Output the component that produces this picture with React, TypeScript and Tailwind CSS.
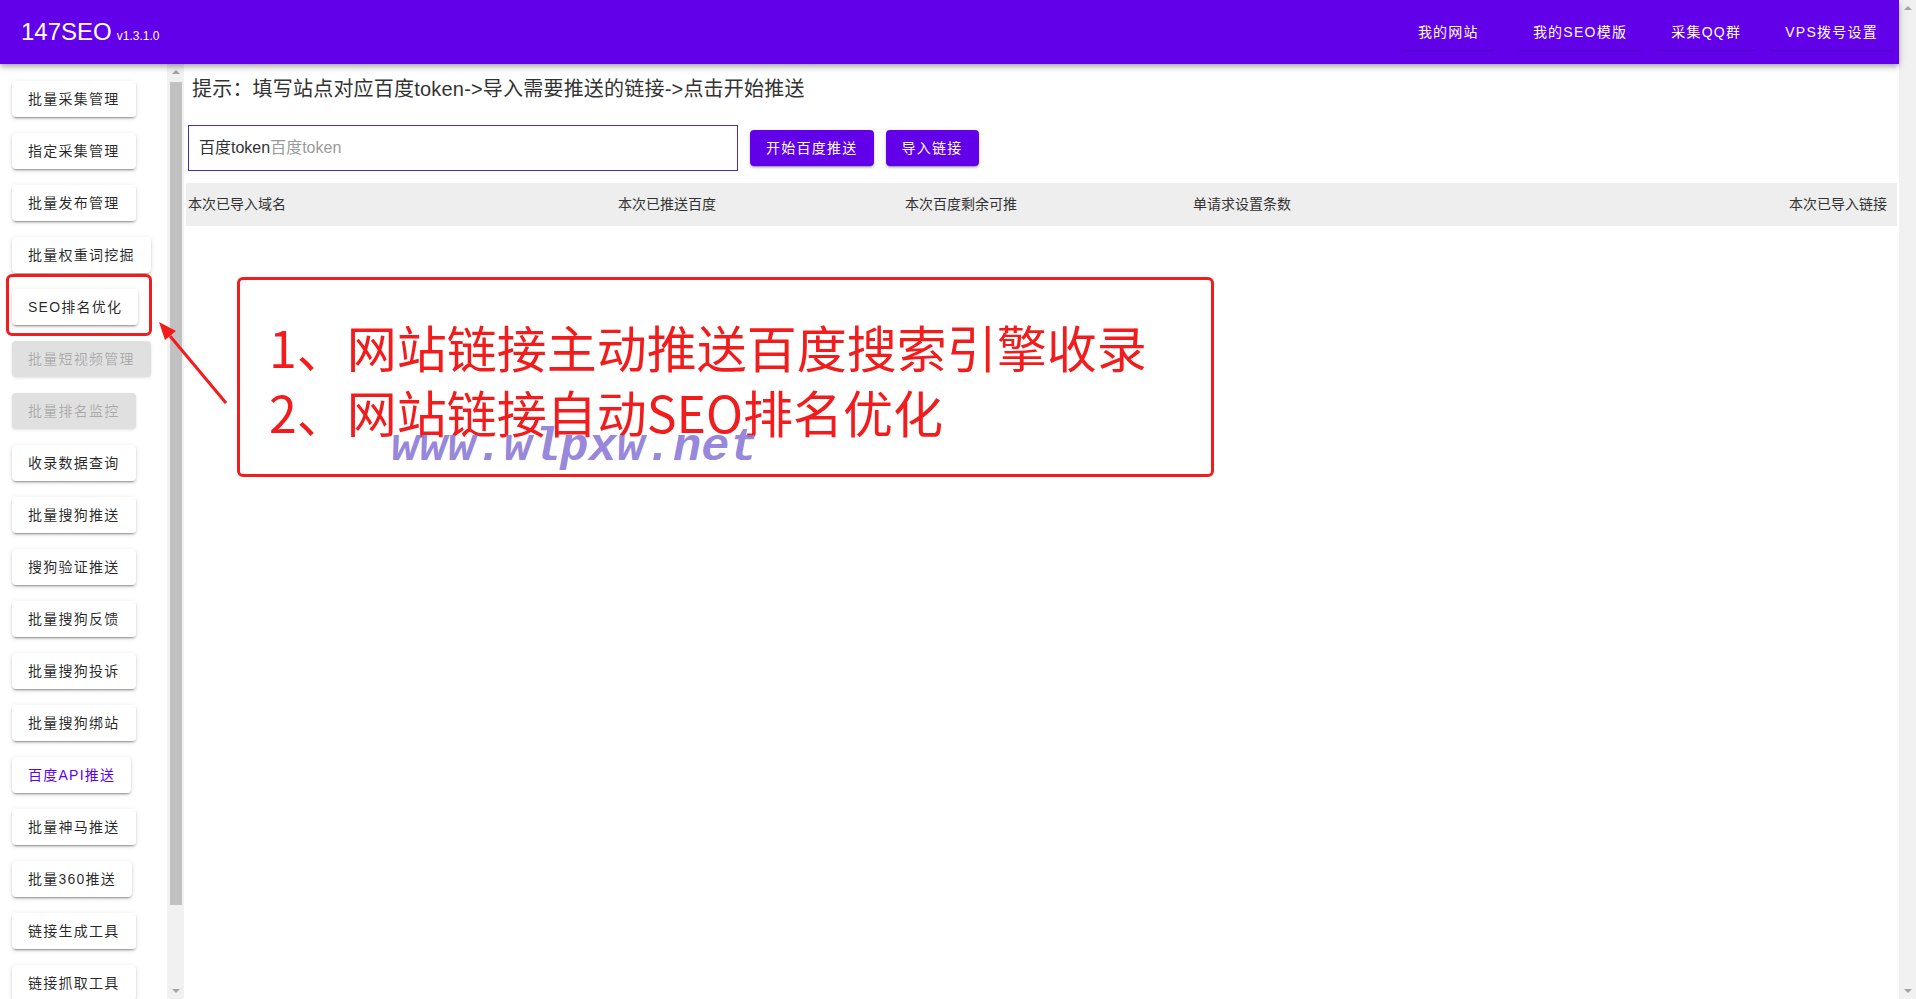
import React from "react";

const menu: { label: string; state?: "disabled" | "active" }[] = [
  { label: "批量采集管理" },
  { label: "指定采集管理" },
  { label: "批量发布管理" },
  { label: "批量权重词挖掘" },
  { label: "SEO排名优化" },
  { label: "批量短视频管理", state: "disabled" },
  { label: "批量排名监控", state: "disabled" },
  { label: "收录数据查询" },
  { label: "批量搜狗推送" },
  { label: "搜狗验证推送" },
  { label: "批量搜狗反馈" },
  { label: "批量搜狗投诉" },
  { label: "批量搜狗绑站" },
  { label: "百度API推送", state: "active" },
  { label: "批量神马推送" },
  { label: "批量360推送" },
  { label: "链接生成工具" },
  { label: "链接抓取工具" },
];

const navItems = ["我的网站", "我的SEO模版", "采集QQ群", "VPS拨号设置"];

const elev =
  "shadow-[0_3px_1px_-2px_rgba(0,0,0,0.2),0_2px_2px_0_rgba(0,0,0,0.14),0_1px_5px_0_rgba(0,0,0,0.12)]";

function ArrowUp() {
  return <div className="h-0 w-0 border-x-[4px] border-b-[4px] border-x-transparent border-b-[#a3a3a3]" />;
}
function ArrowDown() {
  return <div className="h-0 w-0 border-x-[4px] border-t-[4px] border-x-transparent border-t-[#a3a3a3]" />;
}

export default function App() {
  return (
    <div className="relative flex h-[999px] w-full overflow-hidden bg-white font-['Liberation_Sans','Noto_Sans_CJK_SC',sans-serif] text-[#333]">
      <div className="flex min-w-0 flex-1 flex-col">
        {/* top bar */}
        <header className="relative z-10 flex h-16 shrink-0 items-center justify-between bg-[#6200ea] pl-[21px] pr-[5px] text-white shadow-[0_2px_4px_-1px_rgba(0,0,0,0.2),0_4px_5px_0_rgba(0,0,0,0.14),0_1px_10px_0_rgba(0,0,0,0.12)]">
          <div className="flex items-baseline gap-[5px]">
            <span className="text-[24px] leading-none">147SEO</span>
            <span className="text-[12px] leading-none">v1.3.1.0</span>
          </div>
          <nav className="flex items-center gap-3">
            {navItems.map((n, i) => (
              <button
                key={n}
                className={`h-9 rounded bg-[#6200ea] px-4 text-[14px] tracking-[1.25px] text-white shadow-[0_2px_1px_-1px_rgba(0,0,0,0.18)] ${
                  i === 0 ? "mr-[10px]" : ""
                }`}
              >
                {n}
              </button>
            ))}
          </nav>
        </header>

        <div className="flex min-h-0 flex-1">
          {/* side menu */}
          <aside className="flex w-[167px] shrink-0 flex-col items-start gap-4 overflow-hidden pl-3 pt-[17px]">
            {menu.map((m) => (
              <button
                key={m.label}
                className={`h-9 shrink-0 rounded px-4 text-[14px] tracking-[1.25px] ${
                  m.state === "disabled"
                    ? "bg-[#e0e0e0] text-black/25 shadow-[0_1px_3px_rgba(0,0,0,0.12)]"
                    : m.state === "active"
                    ? `bg-white text-[#6200ea] ${elev}`
                    : `bg-white text-black/85 ${elev}`
                }`}
              >
                {m.label}
              </button>
            ))}
          </aside>
          <div className="flex w-[17px] shrink-0 flex-col items-center bg-[#f1f1f1] pt-[6px] pb-[6px]">
            <ArrowUp />
            <div className="mt-[8px] h-[823px] w-[12px] bg-[#c1c1c1]" />
            <div className="flex-1" />
            <ArrowDown />
          </div>

          {/* main */}
          <main className="flex min-w-0 flex-1 flex-col pr-[2px]">
            <div className="pl-[8px] pt-[11px] text-[20px] leading-[28px] tracking-[0.2px] text-[#333]">
              提示：填写站点对应百度token-&gt;导入需要推送的链接-&gt;点击开始推送
            </div>
            <div className="mt-[22px] flex items-center gap-3 pl-1">
              <div className="flex h-[46px] w-[550px] items-center border border-[#4b2bb8] px-[10px] text-[16px]">
                <span className="text-[#333]">百度token</span>
                <input
                  className="min-w-0 flex-1 bg-transparent text-[16px] outline-none placeholder:text-[#9a9a9a]"
                  placeholder="百度token"
                />
              </div>
              <button className={`h-9 rounded bg-[#6200ea] px-4 text-[14px] tracking-[1.25px] text-white ${elev}`}>
                开始百度推送
              </button>
              <button className={`h-9 rounded bg-[#6200ea] px-4 text-[14px] tracking-[1.25px] text-white ${elev}`}>
                导入链接
              </button>
            </div>
            <div className="ml-[2px] mt-3 grid h-[43px] grid-cols-[430px_287px_288px_1fr_auto] items-center bg-[#eeeeee] pl-[2px] pr-[10px] text-[14px] text-[#333]">
              <span>本次已导入域名</span>
              <span>本次已推送百度</span>
              <span>本次百度剩余可推</span>
              <span>单请求设置条数</span>
              <span>本次已导入链接</span>
            </div>
          </main>
        </div>
      </div>

      {/* page scrollbar */}
      <div className="flex w-[17px] shrink-0 flex-col items-center justify-between bg-[#f1f1f1] py-[6px]">
        <ArrowUp />
        <ArrowDown />
      </div>

      {/* annotation overlay */}
      <div className="absolute left-[6px] top-[274px] h-[62px] w-[146px] rounded-md border-[3px] border-[#f21c1c]" />
      <svg className="absolute left-[150px] top-[310px]" width="90" height="100" viewBox="0 0 90 100">
        <line x1="76" y1="93" x2="20" y2="26" stroke="#f21c1c" strokeWidth="3" />
        <polygon points="9,12 26,21 15,30" fill="#f21c1c" />
      </svg>
      <div className="absolute left-[237px] top-[277px] h-[200px] w-[977px] rounded-md border-[3px] border-[#f21c1c] pl-[29px] pt-[34px] font-['Noto_Sans_CJK_SC',sans-serif] text-[50px] leading-[65px] text-[#f21c1c]">
        <div>1、网站链接主动推送百度搜索引擎收录</div>
        <div>2、网站链接自动SEO排名优化</div>
        <div className="absolute left-[151px] top-[142px] font-['Liberation_Mono',monospace] text-[47px] font-bold italic leading-[52px] text-[#8a78d8]/90">
          www.wlpxw.net
        </div>
      </div>
    </div>
  );
}
